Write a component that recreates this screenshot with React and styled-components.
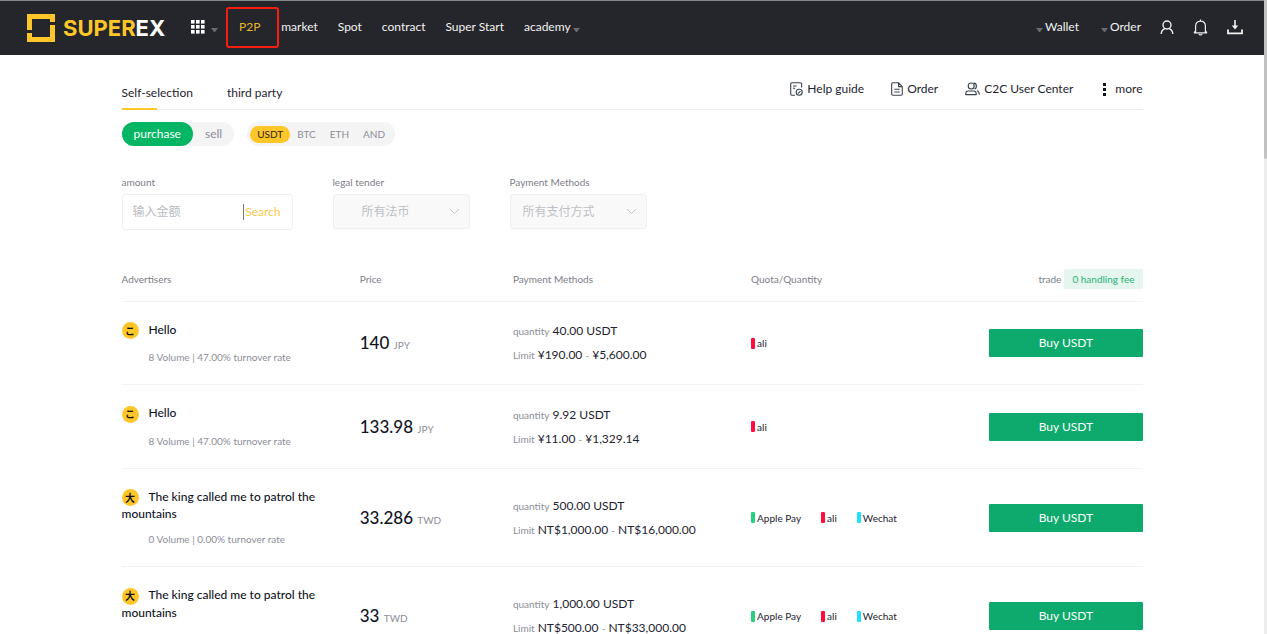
import React from 'react';
import styled, { createGlobalStyle } from 'styled-components';

const GlobalStyle = createGlobalStyle`
  * { box-sizing: border-box; }
  body {
    margin: 0;
    background: #fff;
    color: #1e2330;
    font-family: Lato, "Noto Sans CJK SC", sans-serif;
    font-size: 12px;
    line-height: 16px;
  }
  button, input, select { font: inherit; color: inherit; margin: 0; padding: 0; border: 0; background: none; }
  button { cursor: pointer; }
  a { color: inherit; text-decoration: none; }
`;

const Shell = styled.div`
  display: flex;
  height: 100vh;
`;

const Page = styled.div`
  flex: 1;
  min-width: 0;
  overflow-y: auto;
  scrollbar-width: none;
`;

const ScrollTrack = styled.div`
  width: 3px;
  background: #ededed;
`;

const ScrollThumb = styled.div`
  height: 25%;
  border-radius: 0 0 2px 2px;
  background: #c1c1c1;
`;

const Header = styled.header`
  display: flex;
  align-items: center;
  height: 55px;
  padding: 0 21px 2px 27px;
  border-top: 1px solid #858b8b;
  background: #25262b;
  color: #f2f2f2;
`;

const Brand = styled.a`
  display: flex;
  align-items: center;
  gap: 8px;
  margin: 2px 26px 0 0;
  color: #ffc629;
  font: 700 22px/28px Inter, sans-serif;
`;

const BrandTail = styled.span`
  color: #fff;
`;

const MenuButton = styled.button`
  display: flex;
  align-items: center;
  gap: 6px;
  margin-right: 8px;
`;

const Nav = styled.nav`
  display: flex;
  align-items: center;
  gap: ${(p) => p.$gap};
`;

const ActiveLink = styled.a`
  display: grid;
  place-items: center;
  width: 53px;
  height: 41px;
  margin-right: 2px;
  padding-right: 6px;
  border: 2px solid #f81d10;
  border-radius: 3px;
  color: #e9b62a;
`;

const NavLink = styled.a`
  display: flex;
  align-items: center;
  gap: 2px;
`;

const Caret = styled.i`
  width: 7px;
  border: 3px solid transparent;
  border-top: 4px solid #6a6b6e;
  border-bottom: 0;
  margin-top: 5px;
`;

const Account = styled.div`
  display: flex;
  align-items: center;
  gap: 19px;
  margin-left: auto;
`;

const IconButton = styled.button`
  display: flex;
`;

const Main = styled.main`
  width: 1021px;
  max-width: calc(100% - 32px);
  margin: 0 auto;
`;

const TabBar = styled.div`
  display: flex;
  justify-content: space-between;
  height: 55px;
  border-bottom: 1px solid #ececee;
`;

const Tabs = styled.div`
  display: flex;
  gap: 34px;
`;

const Tab = styled.button`
  display: flex;
  flex-direction: column;
  justify-content: space-between;
  height: 55px;
  padding-top: 30px;

  &::after {
    content: "";
    width: 35px;
    height: 2px;
    background: ${(p) => (p.$active ? '#ffc629' : 'transparent')};
  }
`;

const Tools = styled.div`
  display: flex;
  gap: 27px;
  padding-top: 25px;
`;

const Tool = styled.a`
  display: flex;
  align-items: center;
  gap: 4px;
  height: 18px;
`;

const Switches = styled.div`
  display: flex;
  gap: 13px;
  margin-top: 12px;
`;

const SideSwitch = styled.div`
  display: flex;
  border-radius: 12px;
  background: #f4f4f4;
`;

const SideOption = styled.button`
  height: 24px;
  padding: 0 12px;
  border-radius: 12px;
  background: ${(p) => (p.$active ? '#04b563' : 'transparent')};
  color: ${(p) => (p.$active ? '#fff' : '#8c8e99')};
`;

const CoinSwitch = styled.div`
  display: flex;
  align-items: center;
  padding: 0 3px;
  border-radius: 12px;
  background: #f4f4f4;
`;

const Coin = styled.button`
  height: 17px;
  padding: 0 7px;
  border-radius: 9px;
  font-size: 10px;
  background: ${(p) => (p.$active ? '#ffc629' : 'transparent')};
  color: ${(p) => (p.$active ? '#2a2410' : '#8c8e99')};
`;

const Filters = styled.form`
  display: flex;
  gap: 40px;
  margin-top: 28px;
`;

const Field = styled.div`
  width: ${(p) => (p.$wide ? '171px' : '137px')};
`;

const Label = styled.label`
  display: block;
  margin-bottom: 4px;
  color: #7c7e86;
  font-size: 10px;
`;

const SearchBox = styled.div`
  display: flex;
  align-items: center;
  height: 36px;
  padding: 0 11px 0 10px;
  border: 1px solid #f0f0f0;
  border-radius: 3px;
`;

const AmountInput = styled.input`
  flex: 1;
  min-width: 0;
  outline: 0;

  &::placeholder { color: #b9bbc1; }
`;

const SearchButton = styled.button`
  padding-left: 1px;
  border-left: 1px solid #777;
  color: #fac84c;
`;

const SelectBox = styled.div`
  display: grid;
  align-items: center;
  height: 35px;
  border: 1px solid #f0f0f0;
  border-radius: 3px;
  background: #f9f9f9;
  color: #bdbfc5;

  > * { grid-area: 1 / 1; }
  > svg { justify-self: end; margin-right: 9px; pointer-events: none; }
`;

const Select = styled.select`
  appearance: none;
  width: 100%;
  height: 33px;
  padding-left: ${(p) => (p.$indent ? '28px' : '12px')};
`;

const Offers = styled.table`
  width: 100%;
  margin-top: 27px;
  table-layout: fixed;
  border-collapse: separate;
  border-spacing: 0;
`;

const HeadCell = styled.th`
  width: ${(p) => p.$width};
  height: 45px;
  padding: 0;
  border-bottom: 1px solid #f2f2f2;
  color: #7c7e86;
  font-size: 10px;
  font-weight: 400;
  text-align: ${(p) => (p.$end ? 'right' : 'left')};
  white-space: nowrap;
`;

const FeeBadge = styled.span`
  display: inline-block;
  margin-left: 3px;
  padding: 2px 8px;
  border-radius: 2px;
  background: #e5f6ef;
  color: #2bb177;
`;

const Cell = styled.td`
  padding: 0;
  border-bottom: 1px solid #f2f2f2;
  vertical-align: middle;
`;

const Seller = styled.div`
  padding: 20px 0 19px;
  color: #10141f;
`;

const SellerName = styled.div`
  font-weight: 500;
  line-height: 15px;
`;

const Avatar = styled.span`
  display: inline-grid;
  place-items: center;
  width: 17px;
  height: 17px;
  margin-right: 10px;
  border-radius: 50%;
  background: #ffc629;
  font-size: 10px;
  font-weight: 700;
  line-height: 12px;
  vertical-align: middle;
`;

const SellerStats = styled.div`
  margin: 10px 0 0 27px;
  color: #8c8e99;
  font-size: 10px;
  line-height: 16px;
`;

const Price = styled.div`
  padding-top: 2px;
  color: #10141f;
  font-size: 17px;
  font-weight: 500;
  line-height: 24px;
`;

const Muted = styled.span`
  color: #8c8e99;
  font-size: 10px;
  font-weight: 400;
`;

const AmountLine = styled.div`
  line-height: 24px;
`;

const Methods = styled.div`
  display: flex;
  gap: 20px;
  font-size: 10px;
`;

const Method = styled.span`
  display: flex;
  align-items: center;
  gap: 2px;

  &::before {
    content: "";
    width: 4px;
    height: 11px;
    border-radius: 1px;
    background: ${(p) => p.$color};
  }
`;

const BuyButton = styled.button`
  display: block;
  width: 100%;
  height: 28px;
  border-radius: 1px;
  background: #0eaa6d;
  color: #fff;
`;

const LogoMark = () => (
  <svg width="28" height="28" viewBox="0 0 28 28" fill="#ffc629" aria-hidden="true">
    <path d="M0 0H28V8H23V5H5V16H0Z" />
    <path d="M28 11V28H0V19H5V23H23V11Z" />
  </svg>
);

const GridIcon = () => (
  <svg width="14" height="14" viewBox="0 0 14 14" fill="#fff" aria-hidden="true">
    {[0, 5, 10].map((y) => [0, 5, 10].map((x) => (
      <rect key={`${x}-${y}`} x={x} y={y} width="3.6" height="3.6" />
    )))}
  </svg>
);

const UserIcon = () => (
  <svg width="14" height="15" viewBox="0 0 14 15" fill="none" stroke="#eee" strokeWidth="1.4" aria-hidden="true">
    <circle cx="7" cy="5" r="4" />
    <path d="M1.2 14C1.4 11 3 9.2 5 8.6M12.8 14C12.6 11 11 9.2 9 8.6" />
  </svg>
);

const BellIcon = () => (
  <svg width="15" height="17" viewBox="0 0 15 17" fill="none" stroke="#eee" strokeWidth="1.2" aria-hidden="true">
    <path d="M7.5 0.5V2M1 13.8H14M2.6 13.5V7.2C2.6 4 4.6 2.1 7.5 2.1S12.4 4 12.4 7.2V13.5M1 13.8L2.6 12M14 13.8L12.4 12M5.8 15.2C6.6 16.2 8.4 16.2 9.2 15.2" />
  </svg>
);

const DownloadIcon = () => (
  <svg width="16" height="15" viewBox="0 0 16 15" fill="none" stroke="#f2f2f2" aria-hidden="true">
    <path d="M1 9.5V13.4H15V9.5" strokeWidth="1.8" />
    <path d="M8 0V6" strokeWidth="1.6" />
    <path d="M4.8 5.5H11.2L8 9.5Z" fill="#f2f2f2" stroke="none" />
  </svg>
);

const GuideIcon = () => (
  <svg width="13" height="14" viewBox="0 0 13 14" fill="none" stroke="#3a404c" strokeWidth="1.1" aria-hidden="true">
    <path d="M11.6 5.5V2Q11.6 .8 10.4 .8H1.9Q.7 .8 .7 2V12Q.7 13.2 1.9 13.2H5M3 4H6.7M3 6.3H5.2" />
    <circle cx="9.2" cy="10.3" r="3" />
    <path d="M8 11.4L10.5 9.1" />
  </svg>
);

const DocIcon = () => (
  <svg width="12" height="14" viewBox="0 0 12 14" fill="none" stroke="#3a404c" strokeWidth="1.1" aria-hidden="true">
    <path d="M7.6 .8H1.9Q.7 .8 .7 2V12Q.7 13.2 1.9 13.2H10.1Q11.3 13.2 11.3 12V4.6ZM7.6 .8V4.6H11.3M3.3 7.2H8.7M3.3 10H8.7" />
  </svg>
);

const UsersIcon = () => (
  <svg width="15" height="14" viewBox="0 0 15 14" fill="none" stroke="#3a404c" strokeWidth="1.1" aria-hidden="true">
    <circle cx="6.2" cy="4" r="3" />
    <path d="M.8 12.6V11.6Q.8 9 3.4 9H8.6Q11.2 9 11.2 11.6V12.6ZM8.8 1.1Q11.4 1.4 11.4 4T9.4 7M12 8.8Q14.2 9.4 14.3 12.8" />
  </svg>
);

const DotsIcon = () => (
  <svg width="11" height="13" viewBox="0 0 11 13" fill="#10141f" aria-hidden="true">
    <rect x="3" y="0" width="3" height="3" />
    <rect x="3" y="5" width="3" height="3" />
    <rect x="3" y="10" width="3" height="3" />
  </svg>
);

const ChevronIcon = () => (
  <svg width="11" height="7" viewBox="0 0 11 7" fill="none" stroke="#c3c5ca" aria-hidden="true">
    <path d="M1 1L5.5 5.6L10 1" />
  </svg>
);

const COLORS = { 'Apple Pay': '#25d07f', ali: '#ff0d3d', Wechat: '#1fe1fb' };

const OFFERS = [
  { mark: 'こ', name: 'Hello', stats: '8 Volume | 47.00% turnover rate', price: '140', currency: 'JPY', quantity: '40.00 USDT', min: '¥190.00', max: '¥5,600.00', methods: ['ali'] },
  { mark: 'こ', name: 'Hello', stats: '8 Volume | 47.00% turnover rate', price: '133.98', currency: 'JPY', quantity: '9.92 USDT', min: '¥11.00', max: '¥1,329.14', methods: ['ali'] },
  { mark: '大', name: 'The king called me to patrol the mountains', stats: '0 Volume | 0.00% turnover rate', price: '33.286', currency: 'TWD', quantity: '500.00 USDT', min: 'NT$1,000.00', max: 'NT$16,000.00', methods: ['Apple Pay', 'ali', 'Wechat'] },
  { mark: '大', name: 'The king called me to patrol the mountains', stats: '0 Volume | 0.00% turnover rate', price: '33', currency: 'TWD', quantity: '1,000.00 USDT', min: 'NT$500.00', max: 'NT$33,000.00', methods: ['Apple Pay', 'ali', 'Wechat'] },
];

const OfferRow = ({ offer }) => (
  <tr>
    <Cell>
      <Seller>
        <SellerName><Avatar>{offer.mark}</Avatar>{offer.name}</SellerName>
        <SellerStats>{offer.stats}</SellerStats>
      </Seller>
    </Cell>
    <Cell><Price>{offer.price} <Muted>{offer.currency}</Muted></Price></Cell>
    <Cell>
      <AmountLine><Muted>quantity</Muted> {offer.quantity}</AmountLine>
      <AmountLine><Muted>Limit</Muted> {offer.min} <Muted>-</Muted> {offer.max}</AmountLine>
    </Cell>
    <Cell>
      <Methods>
        {offer.methods.map((m) => <Method key={m} $color={COLORS[m]}>{m}</Method>)}
      </Methods>
    </Cell>
    <Cell><BuyButton type="button">Buy USDT</BuyButton></Cell>
  </tr>
);

export default function App() {
  return (
    <Shell>
      <GlobalStyle />
      <Page>
        <Header>
          <Brand href="#home">
            <LogoMark />
            <span>SUPER<BrandTail>EX</BrandTail></span>
          </Brand>
          <MenuButton type="button" aria-label="All products"><GridIcon /><Caret /></MenuButton>
          <ActiveLink href="#p2p">P2P</ActiveLink>
          <Nav $gap="20px">
            <NavLink href="#market">market</NavLink>
            <NavLink href="#spot">Spot</NavLink>
            <NavLink href="#contract">contract</NavLink>
            <NavLink href="#start">Super Start</NavLink>
            <NavLink href="#academy">academy<Caret /></NavLink>
          </Nav>
          <Account>
            <Nav $gap="22px">
              <NavLink href="#wallet"><Caret />Wallet</NavLink>
              <NavLink href="#orders"><Caret />Order</NavLink>
            </Nav>
            <IconButton type="button" aria-label="Account"><UserIcon /></IconButton>
            <IconButton type="button" aria-label="Notifications"><BellIcon /></IconButton>
            <IconButton type="button" aria-label="Download"><DownloadIcon /></IconButton>
          </Account>
        </Header>
        <Main>
          <TabBar>
            <Tabs>
              <Tab type="button" $active>Self-selection</Tab>
              <Tab type="button">third party</Tab>
            </Tabs>
            <Tools>
              <Tool href="#guide"><GuideIcon />Help guide</Tool>
              <Tool href="#order"><DocIcon />Order</Tool>
              <Tool href="#center"><UsersIcon />C2C User Center</Tool>
              <Tool href="#more"><DotsIcon />more</Tool>
            </Tools>
          </TabBar>
          <Switches>
            <SideSwitch>
              <SideOption type="button" $active>purchase</SideOption>
              <SideOption type="button">sell</SideOption>
            </SideSwitch>
            <CoinSwitch>
              <Coin type="button" $active>USDT</Coin>
              <Coin type="button">BTC</Coin>
              <Coin type="button">ETH</Coin>
              <Coin type="button">AND</Coin>
            </CoinSwitch>
          </Switches>
          <Filters>
            <Field $wide>
              <Label htmlFor="amount">amount</Label>
              <SearchBox>
                <AmountInput id="amount" placeholder="输入金额" />
                <SearchButton type="button">Search</SearchButton>
              </SearchBox>
            </Field>
            <Field>
              <Label htmlFor="tender">legal tender</Label>
              <SelectBox>
                <Select id="tender" $indent><option>所有法币</option></Select>
                <ChevronIcon />
              </SelectBox>
            </Field>
            <Field>
              <Label htmlFor="method">Payment Methods</Label>
              <SelectBox>
                <Select id="method"><option>所有支付方式</option></Select>
                <ChevronIcon />
              </SelectBox>
            </Field>
          </Filters>
          <Offers>
            <thead>
              <tr>
                <HeadCell $width="23.33%">Advertisers</HeadCell>
                <HeadCell $width="15%">Price</HeadCell>
                <HeadCell $width="23.33%">Payment Methods</HeadCell>
                <HeadCell $width="23.33%">Quota/Quantity</HeadCell>
                <HeadCell $width="15%" $end>trade<FeeBadge>0 handling fee</FeeBadge></HeadCell>
              </tr>
            </thead>
            <tbody>
              {OFFERS.map((offer, i) => <OfferRow key={i} offer={offer} />)}
            </tbody>
          </Offers>
        </Main>
      </Page>
      <ScrollTrack><ScrollThumb /></ScrollTrack>
    </Shell>
  );
}
